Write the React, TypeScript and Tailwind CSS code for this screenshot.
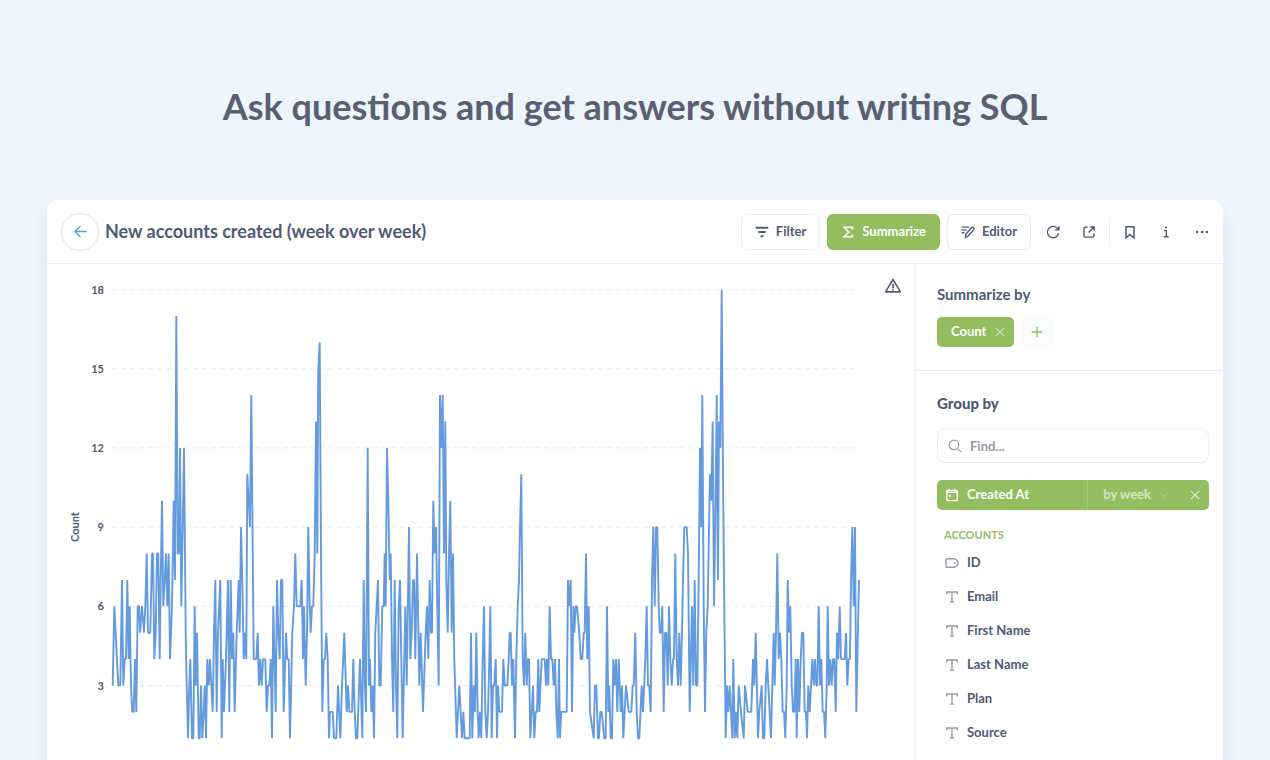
import React from "react";

type Point = [number, number];
type Segment = { start: number; points: Point[] };

// Time offsets are in thirds of a chart unit; counts are accounts per week.
const SEGMENTS: Segment[] = [
  {
    start: 39,
    points: [
      [158, 3], [163, 6], [169, 4.5], [175, 3], [181, 3], [186, 7], [190, 3], [194, 4], [198, 4], [202, 7], [206, 4], [209, 6],
      [213, 3], [217, 2], [221, 2], [225, 4], [229, 2], [233, 6], [237, 6], [240, 5], [246, 6], [252, 5], [256, 6], [260, 8],
      [264, 5], [271, 5], [276, 8], [279, 8], [283, 4], [287, 5], [291, 8], [295, 8], [299, 4], [302, 7], [306, 10], [310, 6],
      [314, 7], [318, 8], [322, 6], [326, 8], [330, 4], [336, 6], [341, 10], [345, 7], [349, 17], [353, 8], [357, 8], [360, 12],
      [364, 6], [368, 9], [372, 12], [377, 5], [380, 3], [384, 1], [388, 3], [391, 4], [396, 1], [400, 1], [404, 6], [407, 3],
      [411, 5], [416, 1], [419, 1], [423, 3], [427, 1], [431, 2], [434, 3], [438, 1], [442, 4], [446, 3], [450, 4], [454, 3],
      [458, 2], [462, 5], [466, 7], [470, 2], [474, 5], [481, 7], [485, 1], [488, 4], [492, 2], [498, 4], [504, 7], [508, 2],
      [512, 7], [516, 4], [520, 5], [524, 2], [530, 5], [536, 7], [539, 5], [543, 9], [547, 7], [551, 4], [555, 5], [559, 4],
      [562, 11], [566, 10], [570, 9],
    ],
  },
  {
    start: 609,
    points: [
      [4, 14], [11, 4], [19, 4], [23, 5], [27, 3], [31, 4], [35, 3], [39, 4], [46, 4], [50, 2], [54, 3], [58, 3],
      [62, 4], [66, 1], [70, 6], [77, 2], [81, 7], [85, 5], [89, 4], [93, 7], [97, 7], [101, 2], [108, 5], [112, 4],
      [116, 4], [120, 1], [127, 5], [132, 6], [136, 8], [140, 6], [151, 6], [155, 7], [159, 4], [162, 6], [167, 3], [171, 5],
      [175, 9], [179, 6], [182, 5], [186, 6], [190, 6], [194, 8], [198, 13], [202, 8], [205, 15], [209, 16], [213, 8], [217, 2],
      [221, 4], [225, 4], [229, 5], [233, 4], [237, 1], [240, 2], [248, 2], [252, 1], [259, 1], [264, 3], [271, 1], [276, 3],
      [283, 5], [290, 2], [294, 3], [298, 2], [306, 2], [310, 4], [314, 2], [318, 1], [322, 1], [330, 4], [337, 1], [341, 7],
      [345, 3], [348, 2], [353, 12], [357, 3], [360, 4], [364, 2], [368, 3], [372, 1], [376, 5], [384, 7], [388, 3], [392, 3],
      [397, 6], [401, 6], [404, 8], [407, 6], [411, 12], [415, 10], [419, 7], [422, 8], [426, 4], [430, 2], [434, 7], [438, 3],
      [442, 1], [446, 6], [450, 7], [458, 1], [466, 6], [470, 3], [477, 9], [481, 4], [485, 5], [489, 7], [492, 7], [496, 4],
      [501, 8], [508, 3], [512, 5], [519, 2], [527, 5], [531, 6], [535, 4], [539, 7], [543, 5], [546, 5], [550, 10], [554, 8],
      [558, 9], [562, 6], [566, 3], [570, 14], [574, 12], [578, 14], [582, 8], [586, 13], [589, 7], [593, 5], [597, 8], [601, 10],
      [605, 5], [609, 8], [613, 4], [620, 1],
    ],
  },
  {
    start: 1209,
    points: [
      [28, 3], [36, 1], [40, 2], [44, 1], [59, 1], [63, 5], [67, 1], [71, 3], [75, 2], [79, 5], [83, 2], [86, 1],
      [90, 2], [94, 1], [98, 4], [102, 6], [106, 2], [110, 1], [114, 2], [118, 4], [121, 6], [125, 1], [129, 3], [133, 3],
      [137, 4], [141, 1], [144, 3], [148, 2], [156, 2], [160, 4], [164, 3], [172, 3], [176, 4], [179, 5], [182, 5], [186, 3],
      [190, 4], [195, 1], [199, 4], [203, 6], [207, 7], [210, 9], [214, 11], [218, 4], [222, 3], [226, 5], [230, 3], [233, 4],
      [237, 4], [241, 1], [249, 3], [253, 1], [257, 2], [261, 2], [265, 4], [268, 2], [275, 4], [284, 4], [288, 3], [291, 4],
      [295, 3], [299, 6], [303, 4], [307, 4], [311, 3], [315, 4], [319, 2], [323, 1], [327, 4], [330, 1], [334, 2], [350, 2],
      [354, 7], [358, 6], [362, 7], [366, 2], [370, 6], [373, 5], [377, 6], [381, 6], [388, 5], [392, 4], [397, 4], [401, 5],
      [404, 5], [408, 8], [412, 4], [416, 6], [420, 2], [431, 1], [435, 3], [439, 3], [444, 1], [447, 1], [451, 2], [455, 2],
      [463, 1], [467, 1], [471, 6], [475, 2], [478, 3], [482, 1], [486, 1], [490, 4], [494, 3], [498, 4], [502, 2], [506, 4],
      [512, 2], [516, 3], [520, 1], [528, 3], [536, 2], [544, 2], [548, 3], [551, 3], [556, 5], [560, 2], [564, 1], [568, 1],
      [575, 3], [579, 2], [586, 4], [590, 6], [594, 3], [598, 3], [602, 2], [606, 7],
    ],
  },
  {
    start: 1809,
    points: [
      [10, 9], [14, 6], [18, 9], [22, 9], [26, 6], [29, 5], [33, 5], [37, 6], [41, 2], [45, 5], [49, 5], [53, 3],
      [57, 6], [61, 4], [65, 3], [69, 4], [72, 4], [76, 8], [80, 4], [84, 3], [88, 5], [92, 3], [96, 5], [99, 7],
      [103, 9], [110, 9], [114, 8], [119, 2], [126, 6], [130, 3], [134, 7], [138, 3], [142, 3], [146, 7], [150, 12], [154, 9],
      [157, 14], [161, 6], [165, 2], [169, 5], [173, 6], [177, 9], [180, 11], [184, 10], [188, 13], [192, 6], [196, 9], [200, 14],
      [204, 7], [207, 13], [211, 12], [215, 18], [219, 11], [223, 6], [227, 1], [231, 3], [235, 2], [239, 3], [247, 1], [250, 4],
      [254, 1], [258, 2], [262, 1], [266, 3], [273, 2], [281, 1], [285, 3], [293, 2], [304, 2], [309, 4], [313, 3], [317, 5],
      [324, 1], [328, 2], [335, 3], [339, 1], [343, 1], [347, 3], [351, 4], [355, 3], [363, 1], [367, 3], [371, 5], [374, 3],
      [378, 5], [382, 8], [386, 4], [390, 5], [394, 4], [398, 2], [402, 2], [406, 1], [410, 3], [413, 7], [417, 5], [421, 6],
      [425, 3], [429, 2], [433, 2], [437, 4], [440, 1], [444, 4], [448, 2], [452, 4], [456, 5], [460, 5], [464, 2], [468, 2],
      [471, 1], [475, 3], [479, 2], [483, 3], [487, 4], [491, 3], [495, 4], [499, 3], [502, 3], [506, 6], [510, 3], [514, 4],
      [518, 2], [522, 2], [526, 1], [530, 3], [533, 6], [537, 3], [541, 4], [545, 3], [549, 4], [553, 4], [557, 2], [561, 5],
      [565, 4], [569, 6], [573, 4], [584, 4], [588, 5], [592, 3], [596, 4], [600, 4], [603, 7], [607, 9], [611, 6], [615, 9],
      [619, 2], [627, 7],
    ],
  },
];

const TICKS = [18, 15, 12, 9, 6, 3];
const yFor = (count: number) => 25.5 + (18 - count) * 26.4;
const LINE = SEGMENTS.flatMap(({ start, points }) =>
  points.map(([t, count]) => `${((start + t) / 3).toFixed(1)},${yFor(count).toFixed(1)}`),
).join(" ");

function Chart() {
  return (
    <svg viewBox="0 0 868 496" className="block w-full" role="img" aria-label="Count of new accounts by week">
      {TICKS.map((tick) => (
        <g key={tick}>
          <line x1="65" x2="813" y1={yFor(tick)} y2={yFor(tick)} stroke="#ededee" strokeDasharray="5 4" />
          <text x="57" y={yFor(tick) + 4} textAnchor="end" className="fill-[#505a75] text-[11px] font-bold">
            {tick}
          </text>
        </g>
      ))}
      <text x="32" y="263" transform="rotate(-90 32 263)" textAnchor="middle" className="fill-[#505a75] text-[11px] font-bold">
        Count
      </text>
      <polyline points={LINE} fill="none" stroke="#649bdf" strokeWidth="1.9" strokeLinejoin="bevel" />
    </svg>
  );
}

function Icon({ className, children, size = 16 }: { className?: string; children: React.ReactNode; size?: number }) {
  return (
    <svg
      width={size}
      height={size}
      viewBox="0 0 16 16"
      fill="none"
      stroke="currentColor"
      strokeWidth="1.4"
      className={className}
      aria-hidden="true"
    >
      {children}
    </svg>
  );
}

const Cross = ({ className }: { className?: string }) => (
  <Icon size={12} className={className}>
    <path d="M2.500 2.500l11 11M13.500 2.500l-11 11" />
  </Icon>
);

const TextIcon = () => (
  <Icon size={14}>
    <path d="M2 5V2.200h12V5M8 2.200v11.600M5.400 13.800h5.200" strokeWidth="1.600" />
  </Icon>
);

const IdIcon = () => (
  <Icon size={14}>
    <path
      d="M2.400 3.200h8.200c1.600 0 4.400 2.600 4.400 4.800s-2.800 4.800-4.400 4.800H2.400c-.9 0-1.400-.5-1.400-1.400V4.600c0-.9.5-1.400 1.400-1.400z"
      strokeWidth="1.600"
    />
    <circle cx="11" cy="8" r="1.100" fill="currentColor" stroke="none" />
  </Icon>
);

const FIELDS = ["ID", "Email", "First Name", "Last Name", "Plan", "Source"];

function IconButton({ label, children }: { label: string; children: React.ReactNode }) {
  return (
    <button type="button" aria-label={label} className="flex size-9 items-center justify-center">
      {children}
    </button>
  );
}

function Header() {
  return (
    <header className="flex h-16 items-center border-b border-[#ededee] pr-[3px] pl-[14px]">
      <button
        type="button"
        aria-label="Back"
        className="mr-[6px] flex size-[38px] shrink-0 items-center justify-center rounded-full border border-[#dfe2e6] text-[#649bdf]"
      >
        <Icon size={15}>
          <path d="M14.500 8H2.400M8 2.200L2.200 8 8 13.800" />
        </Icon>
      </button>
      <h2 className="flex-1 truncate text-[18px] font-bold">New accounts created (week over week)</h2>
      <div className="flex gap-[7px] text-[13px] font-bold">
        <button type="button" className="flex h-9 items-center gap-[7px] rounded-md border border-[#ededee] px-[13px]">
          <Icon size={14} className="shrink-0">
            <path d="M.8 3.200h14.400M3.800 8h8.400M6.400 12.800h3.200" strokeWidth="2.200" />
          </Icon>
          Filter
        </button>
        <button type="button" className="flex h-9 items-center gap-[7px] rounded-md bg-[#93be5f] px-[14px] text-white">
          <Icon size={14} className="shrink-0">
            <path d="M13 5V2.600H3.600L8.800 8l-5.200 5.400H13V11" strokeWidth="1.900" />
          </Icon>
          Summarize
        </button>
        <button type="button" className="flex h-9 items-center gap-[7px] rounded-md border border-[#ededee] px-[13px]">
          <Icon size={14} className="shrink-0">
            <path d="M.6 2.400h9M.6 5.600h5.800M.6 8.800h3.400" strokeWidth="1.600" />
            <path
              d="M5 14.200l.5-3.600 6.400-7.400c.6-.7 1.400-.7 2-.2l.5.400c.6.600.6 1.400.1 2l-6.500 7.400z"
              strokeWidth="1.600"
            />
          </Icon>
          Editor
        </button>
      </div>
      <div className="ml-1 flex items-center">
        <IconButton label="Refresh">
          <Icon>
            <path d="M13.700 9.200A5.700 5.700 0 1 1 12 3.900L13.700 5.600M13.900 2v3.900H10" />
          </Icon>
        </IconButton>
        <IconButton label="Share">
          <Icon size={14}>
            <path
              d="M6.500 2.400H3.400c-.7 0-1.200.5-1.200 1.200v9c0 .7.5 1.200 1.200 1.200h9c.7 0 1.200-.5 1.200-1.200V9.600M9.500 2.200h4.400v4.400M13.700 2.400L7.500 8.600"
              strokeWidth="1.600"
            />
          </Icon>
        </IconButton>
        <div className="mx-[2px] h-[30px] w-px bg-[#ededee]" />
        <IconButton label="Bookmark">
          <Icon>
            <path d="M4 2.800h8v11l-4-3.300-4 3.300z" strokeWidth="1.500" />
          </Icon>
        </IconButton>
        <IconButton label="Info">
          <Icon>
            <path d="M6 6.600h2.400v5.800M5.700 12.700h5" />
            <circle cx="8" cy="3.500" r="1.100" fill="currentColor" stroke="none" />
          </Icon>
        </IconButton>
        <IconButton label="More">
          <Icon>
            <g fill="currentColor" stroke="none">
              <circle cx="3.200" cy="8" r="1.200" />
              <circle cx="8" cy="8" r="1.200" />
              <circle cx="12.800" cy="8" r="1.200" />
            </g>
          </Icon>
        </IconButton>
      </div>
    </header>
  );
}

function Sidebar() {
  return (
    <aside className="w-[308px] shrink-0 border-l border-[#ededee]">
      <section className="border-b border-[#ededee] pt-5 pr-[14px] pb-[23px] pl-[21px]">
        <h3 className="text-[15px] leading-5 font-bold">Summarize by</h3>
        <div className="mt-[13px] flex gap-[7px]">
          <button
            type="button"
            className="flex h-[30px] items-center gap-2 rounded-[5px] bg-[#93be5f] pr-2 pl-[14px] text-[13px] font-bold text-white"
          >
            Count
            <Cross className="opacity-60" />
          </button>
          <button
            type="button"
            aria-label="Add metric"
            className="flex h-[30px] w-8 items-center justify-center rounded-md bg-[#fafbfc] text-[#93be5f]"
          >
            <Icon size={14}>
              <path d="M8 2v12M2 8h12" strokeWidth="1.600" />
            </Icon>
          </button>
        </div>
      </section>
      <section className="pt-[22px] pr-[14px] pl-[21px]">
        <h3 className="text-[15px] leading-5 font-black">Group by</h3>
        <label className="mt-[15px] flex h-[35px] items-center gap-2 rounded-lg border border-[#ededee] px-[10px] text-[#949aab]">
          <Icon size={14} className="shrink-0">
            <circle cx="6.800" cy="6.800" r="5.400" />
            <path d="M10.700 10.700l4.300 4.300" />
          </Icon>
          <input
            type="text"
            aria-label="Find a field"
            placeholder="Find..."
            className="h-6 w-full min-w-0 bg-transparent text-[13px] leading-6 font-bold outline-none placeholder:text-[#949aab]"
          />
        </label>
        <div className="mt-[17px] flex h-[30px] items-center rounded-[5px] bg-[#93be5f] text-[13px] font-bold text-white">
          <button type="button" className="flex h-full flex-1 items-center gap-2 pl-2">
            <Icon size={14}>
              <rect x="2" y="2.800" width="12" height="11.600" rx="1" strokeWidth="1.600" />
              <path d="M2 4.900h12M4.800 .8v3M11.200 .8v3" strokeWidth="1.600" />
              <path d="M4.400 7.600h2.400V10H4.400z" fill="currentColor" stroke="none" />
            </Icon>
            Created At
          </button>
          <button type="button" className="flex h-full items-center gap-2 border-l border-white/15 pr-5 pl-[15px]">
            <span className="opacity-60">by week</span>
            <Icon size={10} className="opacity-40">
              <path d="M3 5.500l5 5 5-5" strokeWidth="1.600" />
            </Icon>
          </button>
          <button type="button" aria-label="Remove" className="flex h-full items-center pr-2">
            <Cross className="opacity-80" />
          </button>
        </div>
        <h4 className="mt-[17px] pl-[7px] text-[11px] leading-4 font-bold text-[#93be5f]">ACCOUNTS</h4>
        <ul className="mt-[3px]">
          {FIELDS.map((field) => (
            <li key={field}>
              <button type="button" className="flex h-[34px] w-full items-center gap-2 pl-2 text-[13px] font-bold">
                <span className="text-[#949aab]">{field === "ID" ? <IdIcon /> : <TextIcon />}</span>
                {field}
              </button>
            </li>
          ))}
        </ul>
      </section>
    </aside>
  );
}

export default function App() {
  return (
    <div className="flex min-h-screen flex-col bg-[#edf5fd] px-[47px] font-['Lato',sans-serif] text-[#505a75]">
      <h1 className="flex h-[200px] items-center justify-center pt-[11px] text-center text-[36px] font-bold text-[#5a6072]">
        Ask questions and get answers without writing SQL
      </h1>
      <main className="flex flex-1 flex-col rounded-t-xl bg-white shadow-[0_12px_16px_rgba(90,110,130,0.12)]">
        <Header />
        <div className="flex flex-1">
          <div className="relative min-w-0 flex-1">
            <Chart />
            <button type="button" aria-label="Warning" className="absolute top-[13px] right-[13px]">
              <Icon size={18}>
                <path d="M8 2.200l6.600 11H1.400z" strokeLinejoin="round" />
                <path d="M8 6v4M8 10.800v1.400" strokeWidth="1.500" />
              </Icon>
            </button>
          </div>
          <Sidebar />
        </div>
      </main>
    </div>
  );
}
